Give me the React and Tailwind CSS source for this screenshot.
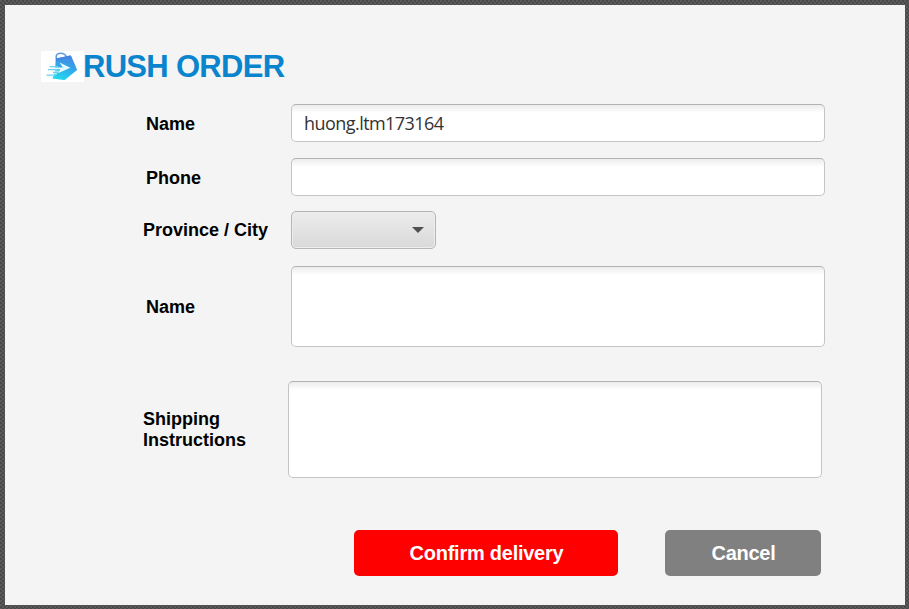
import React from "react";

function BagLogo() {
  return (
    <svg className="block h-[31px] w-[43px] bg-white" viewBox="0 0 43 31">
      <defs>
        <linearGradient id="bag" x1="0.6" y1="0" x2="0.3" y2="1">
          <stop offset="0" stopColor="#4684e4" />
          <stop offset="0.5" stopColor="#32aaea" />
          <stop offset="1" stopColor="#20dcee" />
        </linearGradient>
      </defs>
      <path d="M16 9.5C13.8 4.5 16 2.2 19.5 2.2C23 2.2 25 4 25.8 6.5" fill="none" stroke="#5a9bdc" strokeWidth="1.4" />
      <path d="M14.8 7.6L29.3 4.4Q30 4.3 30.2 5L35.9 18.2Q36.2 19 35.5 19.5L24 28.7Q23.4 29.2 22.5 29L11.5 27.6L13.8 21.5Z" fill="url(#bag)" />
      <path d="M14.8 7.6L29.3 4.4L30.2 6.2L15 10Z" fill="#4486e2" />
      <path d="M18.5 11.5L29.3 16.8L17 22.3L19.3 18.3H13V16.4H21.8Z" fill="#e4fbff" />
      <path d="M8.5 15.7H17M7 18.7H16M12 21.5H17M5.5 24.2H15" fill="none" stroke="#6dd0ee" strokeWidth="1.3" />
      <path d="M10 20.2H18M12 22.8H16M6 26H12" fill="none" stroke="#d9f7fc" strokeWidth="0.9" />
    </svg>
  );
}

function Label({ children, className = "w-[145px]" }) {
  return (
    <label className={`shrink-0 text-[18px] leading-[21px] font-bold text-black ${className}`}>
      {children}
    </label>
  );
}

const field =
  "block w-[534px] resize-none rounded-[5px] border border-[#c4c4c4] border-t-[#b2b2b2] bg-white bg-linear-to-b from-[#ececec] to-white to-[8px] px-3 font-['Open_Sans','Noto_Sans',sans-serif] text-[18px] tracking-[-0.55px] text-[#333333] outline-none";

export default function App() {
  return (
    <div className="h-[609px] w-[909px] overflow-hidden bg-[#555555] bg-[conic-gradient(#484848_25%,#5b5b5b_0_50%,#484848_0_75%,#5b5b5b_0)] bg-[length:4px_4px] p-[5px] pb-1 pr-1 font-['Liberation_Sans',Arial,sans-serif]">
      <main className="flex h-[600px] w-[900px] flex-col bg-[#f4f4f4] pt-[46px]">
        <header className="ml-9 flex h-[31px] items-center">
          <BagLogo />
          <h1 className="-ml-px whitespace-nowrap text-[31px] leading-[31px] font-bold tracking-[-0.7px] text-[#0a84cc]">
            RUSH ORDER
          </h1>
        </header>

        <div className="mt-[22px] ml-[141px] flex h-[38px] items-center">
          <Label className="w-[145px] pt-0.5">Name</Label>
          <input className={`${field} h-[38px]`} defaultValue="huong.ltm173164" />
        </div>
        <div className="mt-4 ml-[141px] flex h-[38px] items-center">
          <Label className="w-[145px] pt-0.5">Phone</Label>
          <input className={`${field} h-[38px]`} />
        </div>
        <div className="mt-[14px] ml-[138px] flex h-[39px] items-center">
          <Label className="w-[148px] pt-0.5">Province / City</Label>
          <button className="flex h-[38px] w-[145px] items-center justify-end rounded-[5px] border border-[#b5b5b5] bg-linear-to-b from-[#ececec] to-[#d9d9d9] pr-[11px] shadow-[inset_0_0_0_1px_#ededed]">
            <svg className="h-[6px] w-[12px]" viewBox="0 0 12 6">
              <path d="M0 0H12L6 6Z" fill="#505050" />
            </svg>
          </button>
        </div>
        <div className="mt-[17px] ml-[141px] flex h-[81px] items-center">
          <Label className="w-[145px] pt-0.5">Name</Label>
          <textarea className={`${field} h-[81px]`} />
        </div>
        <div className="mt-[34px] ml-[138px] flex h-[97px] items-center">
          <Label>
            Shipping
            <br />
            Instructions
          </Label>
          <textarea className={`${field} h-[97px]`} />
        </div>

        <div className="mt-[52px] ml-[349px] flex gap-[47px] text-[20px] font-bold tracking-[-0.25px] text-white">
          <button className="h-[46px] w-[264px] rounded-[5px] bg-[#ff0000] pl-px">Confirm delivery</button>
          <button className="h-[46px] w-[156px] rounded-[5px] bg-[#808080] pl-px">Cancel</button>
        </div>
      </main>
    </div>
  );
}
